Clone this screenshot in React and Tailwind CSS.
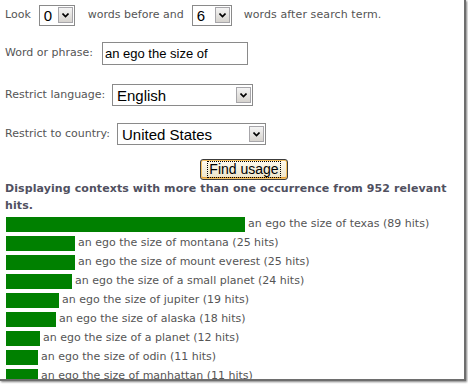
import React from 'react';

const hits = [
  { text: 'an ego the size of texas (89 hits)', w: 239 },
  { text: 'an ego the size of montana (25 hits)', w: 69 },
  { text: 'an ego the size of mount everest (25 hits)', w: 69 },
  { text: 'an ego the size of a small planet (24 hits)', w: 66 },
  { text: 'an ego the size of jupiter (19 hits)', w: 53 },
  { text: 'an ego the size of alaska (18 hits)', w: 50 },
  { text: 'an ego the size of a planet (12 hits)', w: 34 },
  { text: 'an ego the size of odin (11 hits)', w: 32 },
  { text: 'an ego the size of manhattan (11 hits)', w: 32 },
];

const Arrow = () => (
  <div className="w-[15px] h-[16px] border border-[#a7a6aa] bg-gradient-to-b from-[#f4f4f4] to-[#d6d3ce] flex items-center justify-center">
    <svg width="7" height="5" viewBox="0 0 7 5">
      <path d="M0.5 0.5 L3.5 3.5 L6.5 0.5" fill="none" stroke="#000" strokeWidth="1.6" />
    </svg>
  </div>
);

const Select = ({ value, width, height = 21 }) => (
  <div
    style={{ width, height }}
    className="border border-[#8a8a8a] bg-white flex items-center justify-between pl-[4px] pr-[1px] font-['Liberation_Sans',sans-serif] text-[15px] text-black leading-none"
  >
    <span>{value}</span>
    <Arrow />
  </div>
);

export default function App() {
  return (
    <div className="w-[468px] h-[384px] bg-white overflow-hidden">
      <div className="w-[466px] h-[381px] overflow-hidden border-r-2 border-b-2 border-[#6e6e6e] shadow-[1px_1px_2px_rgba(0,0,0,0.5)] font-['DejaVu_Sans',Verdana,sans-serif] text-[11px] text-[#555]">
        <div className="flex items-center pl-[5px] pt-[4px] h-[26px]">
          <span>Look</span>
          <div className="ml-[8px]"><Select value="0" width={36} /></div>
          <span className="ml-[13px]">words before and</span>
          <div className="ml-[8px]"><Select value="6" width={40} /></div>
          <span className="ml-[12px] tracking-[0.1px]">words after search term.</span>
        </div>

        <div className="flex items-center pl-[5px] mt-[16px]">
          <span className="w-[97px]">Word or phrase:</span>
          <div className="w-[146px] h-[23px] border border-[#8a8a8a] bg-white flex items-center px-[2px] font-['Liberation_Sans',sans-serif] text-[13px] text-black">
            an ego the size of
          </div>
        </div>

        <div className="flex items-center pl-[5px] mt-[19px]">
          <span className="w-[107px]">Restrict language:</span>
          <Select value="English" width={141} height={22} />
        </div>

        <div className="flex items-center pl-[5px] mt-[17px]">
          <span className="w-[112px]">Restrict to country:</span>
          <Select value="United States" width={149} height={22} />
        </div>

        <div className="pl-[200px] mt-[14px]">
          <div className="w-[88px] h-[21px] rounded-[3px] border border-[#3c3c3c] bg-gradient-to-b from-[#fffbf0] to-[#ece4c8] shadow-[inset_0_0_0_1px_#f5c160,inset_0_-1px_0_1px_#e5a03a] flex items-center justify-center">
            <span className="border border-dotted border-black px-[1px] leading-[15px] font-['Liberation_Sans',sans-serif] text-[14px] text-black">
              Find usage
            </span>
          </div>
        </div>

        <div className="pl-[5px] pr-[2px] leading-[17px] font-bold tracking-[0.09px] text-[#505060]">
          Displaying contexts with more than one occurrence from 952 relevant hits.
        </div>

        <div className="flex flex-col gap-[4px] pl-[6px] pt-[3px]">
          {hits.map(h => (
            <div key={h.text} className="flex items-center h-[15px]">
              <div style={{ width: h.w }} className="h-[15px] bg-[#008000] shrink-0"></div>
              <span className="ml-[3px] whitespace-nowrap">{h.text}</span>
            </div>
          ))}
        </div>
      </div>
    </div>
  );
}
